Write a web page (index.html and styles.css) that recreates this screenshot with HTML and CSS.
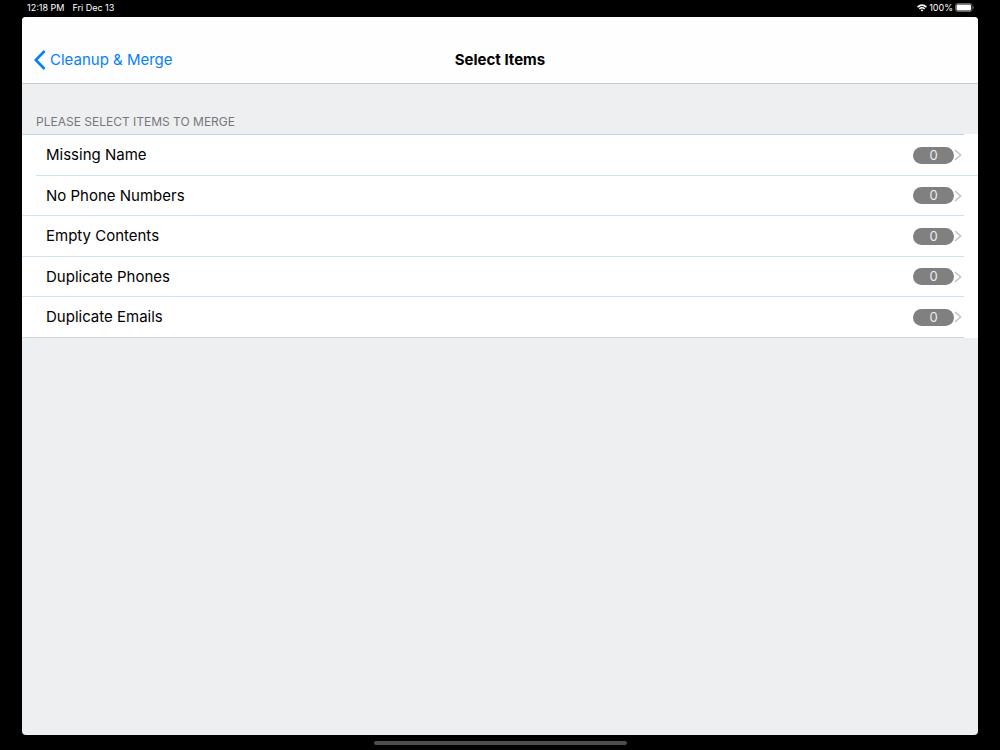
FILE: index.html
```html
<!DOCTYPE html>
<html lang="en">
<head>
<meta charset="utf-8">
<meta name="viewport" content="width=device-width, initial-scale=1">
<title>Select Items</title>
<link rel="stylesheet" href="styles.css">
</head>
<body>
<div class="status">
  <div class="status-group status-left"><span>12:18 PM</span><span>Fri Dec 13</span></div>
  <div class="status-group status-right">
    <svg class="wifi" viewBox="0 0 20 15" aria-hidden="true"><path d="M0 4.6Q10-4.2 20 4.6L17.8 6.8Q10 0 2.2 6.8ZM3.6 8.2Q10 2.4 16.4 8.2L14.1 10.5Q10 6.8 5.9 10.5ZM7.2 11.8Q10 9.4 12.8 11.8L10 14.7Z"/></svg>
    <span>100%</span>
    <svg class="battery" viewBox="0 0 38 18" aria-hidden="true"><rect class="case" x="1" y="1" width="33" height="16" rx="4"/><rect class="charge" x="3" y="3" width="29" height="12" rx="2"/><path class="tip" d="M35.5 6Q38 7 38 9T35.5 12Z"/></svg>
  </div>
</div>
<div class="window">
  <header class="navbar">
    <a class="back" href="#"><svg class="back-icon" viewBox="0 0 12 20" aria-hidden="true"><path d="M10.6 1 1.8 10l8.8 9"/></svg><span>Cleanup &amp; Merge</span></a>
    <h1 class="title">Select Items</h1>
  </header>
  <main class="content">
    <h2 class="section-title">PLEASE SELECT ITEMS TO MERGE</h2>
    <ul class="list">
      <li class="row row-inset"><a class="item" href="#"><span class="label">Missing Name</span><span class="badge">0</span><svg class="chevron" viewBox="0 0 8 12" aria-hidden="true"><path d="m1 1 5.6 5L1 11"/></svg></a></li>
      <li class="row"><a class="item" href="#"><span class="label">No Phone Numbers</span><span class="badge">0</span><svg class="chevron" viewBox="0 0 8 12" aria-hidden="true"><path d="m1 1 5.6 5L1 11"/></svg></a></li>
      <li class="row"><a class="item" href="#"><span class="label">Empty Contents</span><span class="badge">0</span><svg class="chevron" viewBox="0 0 8 12" aria-hidden="true"><path d="m1 1 5.6 5L1 11"/></svg></a></li>
      <li class="row"><a class="item" href="#"><span class="label">Duplicate Phones</span><span class="badge">0</span><svg class="chevron" viewBox="0 0 8 12" aria-hidden="true"><path d="m1 1 5.6 5L1 11"/></svg></a></li>
      <li class="row"><a class="item" href="#"><span class="label">Duplicate Emails</span><span class="badge">0</span><svg class="chevron" viewBox="0 0 8 12" aria-hidden="true"><path d="m1 1 5.6 5L1 11"/></svg></a></li>
    </ul>
  </main>
</div>
<div class="home"><div class="home-bar"></div></div>
</body>
</html>
```
FILE: styles.css
```css
* { box-sizing: border-box; }

body {
  display: flex;
  flex-direction: column;
  min-height: 100vh;
  margin: 0;
  background: #000;
  color: #000;
  font-family: Inter, "Liberation Sans", sans-serif;
  font-size: 15px;
  line-height: 20px;
}

a { color: inherit; text-decoration: none; }

.status {
  display: flex;
  justify-content: space-between;
  height: 17px;
  padding: 0 26px 2px 27px;
  color: #fff;
  font-size: 9px;
  line-height: 15px;
}

.status-group { display: flex; align-items: center; }
.status-left { gap: 8px; }
.status-right { gap: 2px; }
.wifi { width: 10px; height: 8px; fill: #fff; }
.battery { width: 19px; height: 9px; }
.case { fill: none; stroke: #666; stroke-width: 2; }
.charge { fill: #fff; }
.tip { fill: #666; }

.window {
  display: flex;
  flex: 1;
  flex-direction: column;
  margin: 0 22px;
  overflow: hidden;
  border-radius: 4px;
  background: #eeeff1;
}

.navbar {
  display: grid;
  grid-template-columns: 1fr auto 1fr;
  align-items: center;
  padding: 33px 12px 13px;
  border-bottom: 1px solid #ccccce;
  background: #fefefe;
}

.back {
  display: flex;
  align-items: center;
  gap: 4px;
  color: #087efe;
}

.back-icon {
  width: 12px;
  height: 20px;
  fill: none;
  stroke: #087efe;
  stroke-width: 2.6;
}

.title {
  margin: 0;
  font-size: 15px;
  font-weight: 700;
}

.section-title {
  margin: 0;
  padding: 28px 14px 2px;
  color: #77777b;
  font-size: 12px;
  font-weight: 400;
}

.list {
  margin: 0;
  padding: 1px 0 0;
  list-style: none;
  background: linear-gradient(#b9d7ec, #b9d7ec) 0 0 / calc(100% - 14px) 1px no-repeat #fff;
}

.row {
  height: 40px;
  background: linear-gradient(#cfe4f2, #cfe4f2) 0 100% / calc(100% - 14px) 1px no-repeat;
}

.row:nth-child(odd) { height: 41px; }
.row-inset { background-position: 100% 100%; }
.row:last-child { background-image: linear-gradient(#c8d7e1, #c8d7e1); }

.item {
  display: flex;
  align-items: center;
  height: 100%;
  padding: 0 16px 1px 24px;
}

.label { flex: 1; }

.badge {
  width: 41px;
  border-radius: 9px;
  background: #808080;
  color: #eee;
  font-size: 13px;
  line-height: 17px;
  text-align: center;
}

.chevron {
  width: 8px;
  height: 12px;
  fill: none;
  stroke: #c4c4c6;
  stroke-width: 1.6;
}

.home {
  display: flex;
  align-items: center;
  justify-content: center;
  height: 15px;
}

.home-bar {
  width: 25.3%;
  height: 4px;
  border-radius: 2px;
  background: #4d4d4d;
}
```
